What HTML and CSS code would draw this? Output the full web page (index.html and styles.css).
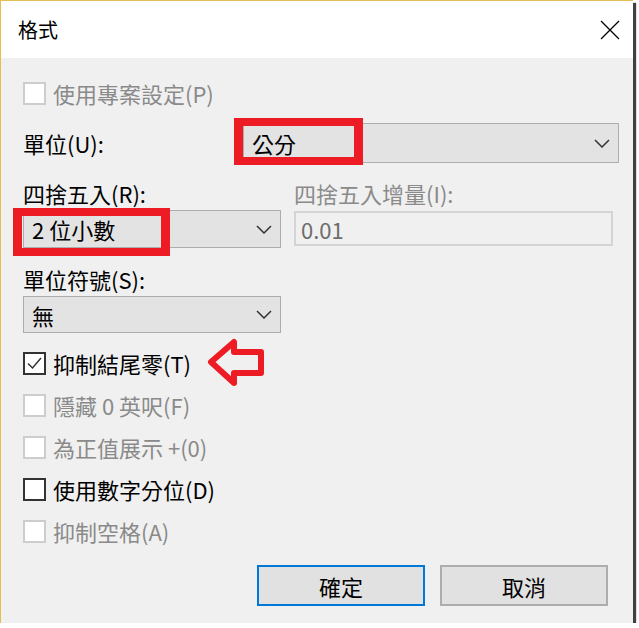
FILE: index.html
```html
<!doctype html>
<html lang="zh-Hant">
<head>
  <meta charset="UTF-8">
  <title>格式</title>
  <link rel="stylesheet" href="styles.css">
</head>
<body>
  <div class="window">
    <div class="titlebar">
      <span class="title">格式</span>
      <svg class="close" width="20" height="20" viewBox="0 0 20 20">
        <path d="M1 1 L19 19 M19 1 L1 19" stroke="#000" stroke-width="1.3" fill="none"/>
      </svg>
    </div>

    <div class="content">
      <div class="check-row first disabled">
        <span class="box"></span>
        <span>使用專案設定(P)</span>
      </div>

      <div class="unit-row">
        <span class="label">單位(U):</span>
        <div class="combo">
          <span>公分</span>
          <svg class="chevron" width="16" height="9" viewBox="0 0 16 9"><path d="M1 1 L8 8 L15 1" stroke="#333" stroke-width="1.5" fill="none"/></svg>
          <div class="mark mark-unit"></div>
        </div>
      </div>

      <div class="round-row">
        <div class="col left">
          <span class="label">四捨五入(R):</span>
          <div class="combo small">
            <span>2 位小數</span>
            <svg class="chevron" width="16" height="9" viewBox="0 0 16 9"><path d="M1 1 L8 8 L15 1" stroke="#333" stroke-width="1.5" fill="none"/></svg>
            <div class="mark mark-round"></div>
          </div>
        </div>
        <div class="col right">
          <span class="label disabled-text">四捨五入增量(I):</span>
          <div class="textbox">0.01</div>
        </div>
      </div>

      <div class="symbol-row">
        <span class="label">單位符號(S):</span>
        <div class="combo small narrow">
          <span>無</span>
          <svg class="chevron" width="16" height="9" viewBox="0 0 16 9"><path d="M1 1 L8 8 L15 1" stroke="#333" stroke-width="1.5" fill="none"/></svg>
        </div>
      </div>

      <div class="checks">
        <div class="check-row">
          <span class="box">
            <svg width="19" height="19" viewBox="0 0 19 19"><path d="M3 9.5 L7.5 14 L16 4" stroke="#333" stroke-width="1.5" fill="none"/></svg>
          </span>
          <span>抑制結尾零(T)</span>
          <svg class="arrow" width="62" height="50" viewBox="0 0 62 50">
            <path d="M5 24 L28 4 L28 14 L55 14 L55 35 L28 35 L28 45 Z" stroke="#ed1c24" stroke-width="6" stroke-linejoin="round" fill="none"/>
          </svg>
        </div>
        <div class="check-row disabled">
          <span class="box"></span>
          <span>隱藏 0 英呎(F)</span>
        </div>
        <div class="check-row disabled">
          <span class="box"></span>
          <span>為正值展示 +(0)</span>
        </div>
        <div class="check-row">
          <span class="box"></span>
          <span>使用數字分位(D)</span>
        </div>
        <div class="check-row disabled">
          <span class="box"></span>
          <span>抑制空格(A)</span>
        </div>
      </div>

      <div class="buttons">
        <button class="btn default">確定</button>
        <button class="btn">取消</button>
      </div>
    </div>
  </div>
</body>
</html>
```

FILE: styles.css
```css
* {
  margin: 0;
  padding: 0;
  box-sizing: border-box;
}
body {
  background: #fff;
  font-family: "Noto Sans CJK TC", "Noto Sans", sans-serif;
  color: #000;
}
.window {
  width: 633px;
  height: 623px;
  background: #f0f0f0;
  border-top: 1px solid #e2bf55;
  border-left: 1px solid #e2bf55;
  box-shadow: 3px 3px 1px rgba(0,0,0,0.75);
}
.titlebar {
  height: 57px;
  background: #fff;
  display: flex;
  align-items: center;
  justify-content: space-between;
  padding: 0 13px 0 17px;
}
.title {
  font-size: 20px;
  line-height: 24px;
}
.close {
  display: block;
}
.content {
  padding-left: 22px;
  font-size: 22px;
  line-height: 26px;
}
.label {
  display: block;
  white-space: nowrap;
}
.disabled-text,
.disabled {
  color: #8a8a8a;
}

/* checkboxes */
.check-row {
  height: 42px;
  display: flex;
  align-items: center;
  gap: 7px;
  white-space: nowrap;
}
.check-row.first {
  height: 24px;
  margin-top: 23px;
}
.box {
  width: 23px;
  height: 23px;
  border: 2px solid #333;
  background: #fff;
  display: flex;
  align-items: center;
  justify-content: center;
  flex-shrink: 0;
}
.disabled .box {
  border-color: #cdcdcd;
}
.arrow {
  display: block;
  margin-left: 8px;
}

/* combos */
.combo {
  position: relative;
  height: 38px;
  background: #e3e3e3;
  border: 1px solid #adadad;
  display: flex;
  align-items: center;
  justify-content: space-between;
  padding: 0 8px 0 8px;
  white-space: nowrap;
}
.chevron {
  display: block;
}
.unit-row {
  display: flex;
  align-items: center;
  margin-top: 18px;
  padding-right: 14px;
}
.unit-row .label {
  width: 220px;
}
.unit-row .combo {
  flex: 1;
  height: 40px;
}
.round-row {
  display: flex;
  gap: 13px;
  margin-top: 17px;
}
.col {
  display: flex;
  flex-direction: column;
  gap: 4px;
}
.col.left {
  width: 258px;
}
.col.right {
  width: 319px;
}
.textbox {
  height: 35px;
  border: 2px solid #d4d4d4;
  background: #f0f0f0;
  color: #6d6d6d;
  display: flex;
  align-items: center;
  padding-left: 5px;
  margin-top: 1px;
}
.symbol-row {
  margin-top: 18px;
  display: flex;
  flex-direction: column;
  gap: 4px;
}
.combo.narrow {
  width: 258px;
  height: 37px;
}
.checks {
  margin-top: 9px;
}

/* red annotation boxes */
.mark {
  position: absolute;
  border: 8px solid #ed1c24;
  border-left-width: 9px;
  border-right-width: 9px;
}
.mark-unit {
  left: -10px;
  top: -6px;
  width: 129px;
  height: 47px;
}
.mark-round {
  left: -11px;
  top: -3px;
  width: 157px;
  height: 48px;
}

/* buttons */
.buttons {
  display: flex;
  justify-content: flex-end;
  gap: 15px;
  margin-top: 13px;
  padding-right: 25px;
}
.btn {
  width: 168px;
  height: 41px;
  background: #e1e1e1;
  border: 2px solid #adadad;
  font-family: inherit;
  font-size: 22px;
  color: #000;
}
.btn.default {
  border-color: #0078d7;
}
```
